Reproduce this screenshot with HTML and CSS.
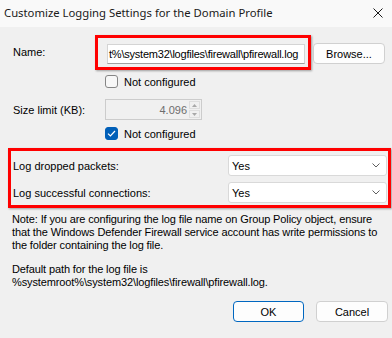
FILE: index.html
```html
<!DOCTYPE html>
<html>
<head>
<meta charset="utf-8">
<link rel="stylesheet" href="styles.css">
</head>
<body>
<div class="titlebar">
  <span class="title">Customize Logging Settings for the Domain Profile</span>
  <svg class="close" width="10" height="10" viewBox="0 0 10 10"><path d="M0.5 0.5 L9.5 9.5 M9.5 0.5 L0.5 9.5" stroke="#1a1a1a" stroke-width="1" fill="none"/></svg>
</div>
<div class="main">
  <div class="name-row">
    <span class="lbl lbl-name">Name:</span>
    <div class="hl hl-name"><div class="input">t%\system32\logfiles\firewall\pfirewall.log</div></div>
    <button class="btn browse">Browse...</button>
  </div>
  <div class="check-row first"><span class="cb"></span><span class="cb-text">Not configured</span></div>
  <div class="size-row">
    <span class="lbl lbl-size">Size limit (KB):</span>
    <div class="spin">
      <span class="spin-val">4.096</span>
      <span class="spin-btns">
        <span class="spin-btn"><svg width="5" height="3" viewBox="0 0 5 3"><path d="M0 3 L2.5 0 L5 3 Z" fill="#a8a8a8"/></svg></span>
        <span class="spin-btn"><svg width="5" height="3" viewBox="0 0 5 3"><path d="M0 0 L2.5 3 L5 0 Z" fill="#a8a8a8"/></svg></span>
      </span>
    </div>
  </div>
  <div class="check-row second"><span class="cb checked"><svg width="9" height="7" viewBox="0 0 9 7"><path d="M1 3.6 L3.4 6 L8 1" stroke="#fff" stroke-width="1.2" fill="none"/></svg></span><span class="cb-text">Not configured</span></div>
  <div class="hl hl-log">
    <div class="log-row">
      <span class="lbl">Log dropped packets:</span>
      <div class="select"><span>Yes</span><svg width="8" height="5" viewBox="0 0 8 5"><path d="M0.5 0.5 L4 4 L7.5 0.5" stroke="#5f5f5f" stroke-width="1" fill="none"/></svg></div>
    </div>
    <div class="log-row">
      <span class="lbl">Log successful connections:</span>
      <div class="select"><span>Yes</span><svg width="8" height="5" viewBox="0 0 8 5"><path d="M0.5 0.5 L4 4 L7.5 0.5" stroke="#5f5f5f" stroke-width="1" fill="none"/></svg></div>
    </div>
  </div>
  <p class="note">Note: If you are configuring the log file name on Group Policy object, ensure<br>that the Windows Defender Firewall service account has write permissions to<br>the folder containing the log file.</p>
  <p class="note path">Default path for the log file is<br>%systemroot%\system32\logfiles\firewall\pfirewall.log.</p>
  <div class="buttons">
    <button class="btn ok">OK</button>
    <button class="btn cancel">Cancel</button>
  </div>
</div>
</body>
</html>
```
FILE: styles.css
```css
* { box-sizing: border-box; }
html, body { margin: 0; padding: 0; }
body {
  width: 392px;
  height: 338px;
  overflow: hidden;
  background: #f0f0f0;
  font-family: "Liberation Sans", Arial, sans-serif;
  font-size: 11px;
  color: #000;
}
.titlebar {
  height: 27px;
  background: #f9f9f9;
  display: flex;
  align-items: center;
  justify-content: space-between;
  padding: 0 9px 2px 4px;
}
.title {
  font-family: "Noto Sans", sans-serif;
  font-size: 11.3px;
  color: #1a1a1a;
}
.close { display: block; }
.main { padding-top: 8px; }

.lbl { display: block; }
.name-row {
  display: flex;
  align-items: flex-start;
  height: 35px;
}
.lbl-name {
  width: 95px;
  padding-left: 13px;
  line-height: 35px;
}
.hl {
  border: 3px solid #f00;
  box-shadow: 1px 1px 2px rgba(0, 0, 0, 0.35);
}
.hl-name {
  width: 216px;
  height: 35px;
  padding: 6px 1px 0 9px;
}
.input {
  width: 198px;
  height: 20px;
  background: #fff;
  border: 1px solid #d4d4d4;
  border-bottom-color: #a0a0a0;
  line-height: 18px;
  padding-left: 1px;
  white-space: nowrap;
  overflow: hidden;
  letter-spacing: -0.22px;
}
.btn {
  font-family: "Liberation Sans", Arial, sans-serif;
  font-size: 11px;
  color: #000;
  background: #fdfdfd;
  border: 1px solid #d0d0d0;
  border-radius: 4px;
  padding: 0;
  height: 21px;
}
.browse {
  margin-left: 2px;
  margin-top: 8px;
  width: 72px;
}

.check-row {
  display: flex;
  align-items: center;
  height: 13px;
  padding-left: 105px;
}
.check-row.first { margin-top: 5px; }
.check-row.second { margin-top: 7px; }
.cb {
  width: 13px;
  height: 13px;
  border: 1px solid #858585;
  border-radius: 3px;
  background: #f7f7f7;
  display: flex;
  align-items: center;
  justify-content: center;
}
.cb.checked {
  background: #005fb8;
  border-color: #005fb8;
}
.cb-text { margin-left: 6px; }

.size-row {
  display: flex;
  align-items: center;
  height: 21px;
  margin-top: 11px;
}
.lbl-size {
  width: 105px;
  padding-left: 13px;
}
.spin {
  width: 97px;
  height: 21px;
  border: 1px solid #cccccc;
  background: #f0f0f0;
  display: flex;
  align-items: center;
  justify-content: flex-end;
  padding-right: 1px;
}
.spin-val { color: #6d6d6d; margin-right: 2px; }
.spin-btns {
  display: flex;
  flex-direction: column;
  gap: 1px;
  width: 11px;
}
.spin-btn {
  height: 8px;
  border: 1px solid #dedede;
  display: flex;
  align-items: center;
  justify-content: center;
}

.hl-log {
  margin: 8px 1px 0 8px;
  height: 60px;
  padding: 4px 1px 2px 2px;
  display: flex;
  flex-direction: column;
  gap: 6px;
}
.log-row {
  display: flex;
  align-items: center;
  height: 21px;
}
.log-row .lbl { flex: 1; }
.select {
  width: 159px;
  height: 21px;
  background: #fff;
  border: 1px solid #d9d9d9;
  border-radius: 3px;
  display: flex;
  align-items: center;
  justify-content: space-between;
  padding: 0 6px 0 3px;
}
.select svg { display: block; }

.note {
  margin: 5px 0 0 0;
  padding-left: 12px;
  line-height: 13px;
  letter-spacing: -0.12px;
}
.note.path { margin-top: 11px; }

.buttons {
  display: flex;
  justify-content: flex-end;
  gap: 12px;
  margin-top: 12px;
  padding-right: 4px;
}
.ok { width: 71px; border-color: #0067c0; }
.cancel { width: 72px; }
```
